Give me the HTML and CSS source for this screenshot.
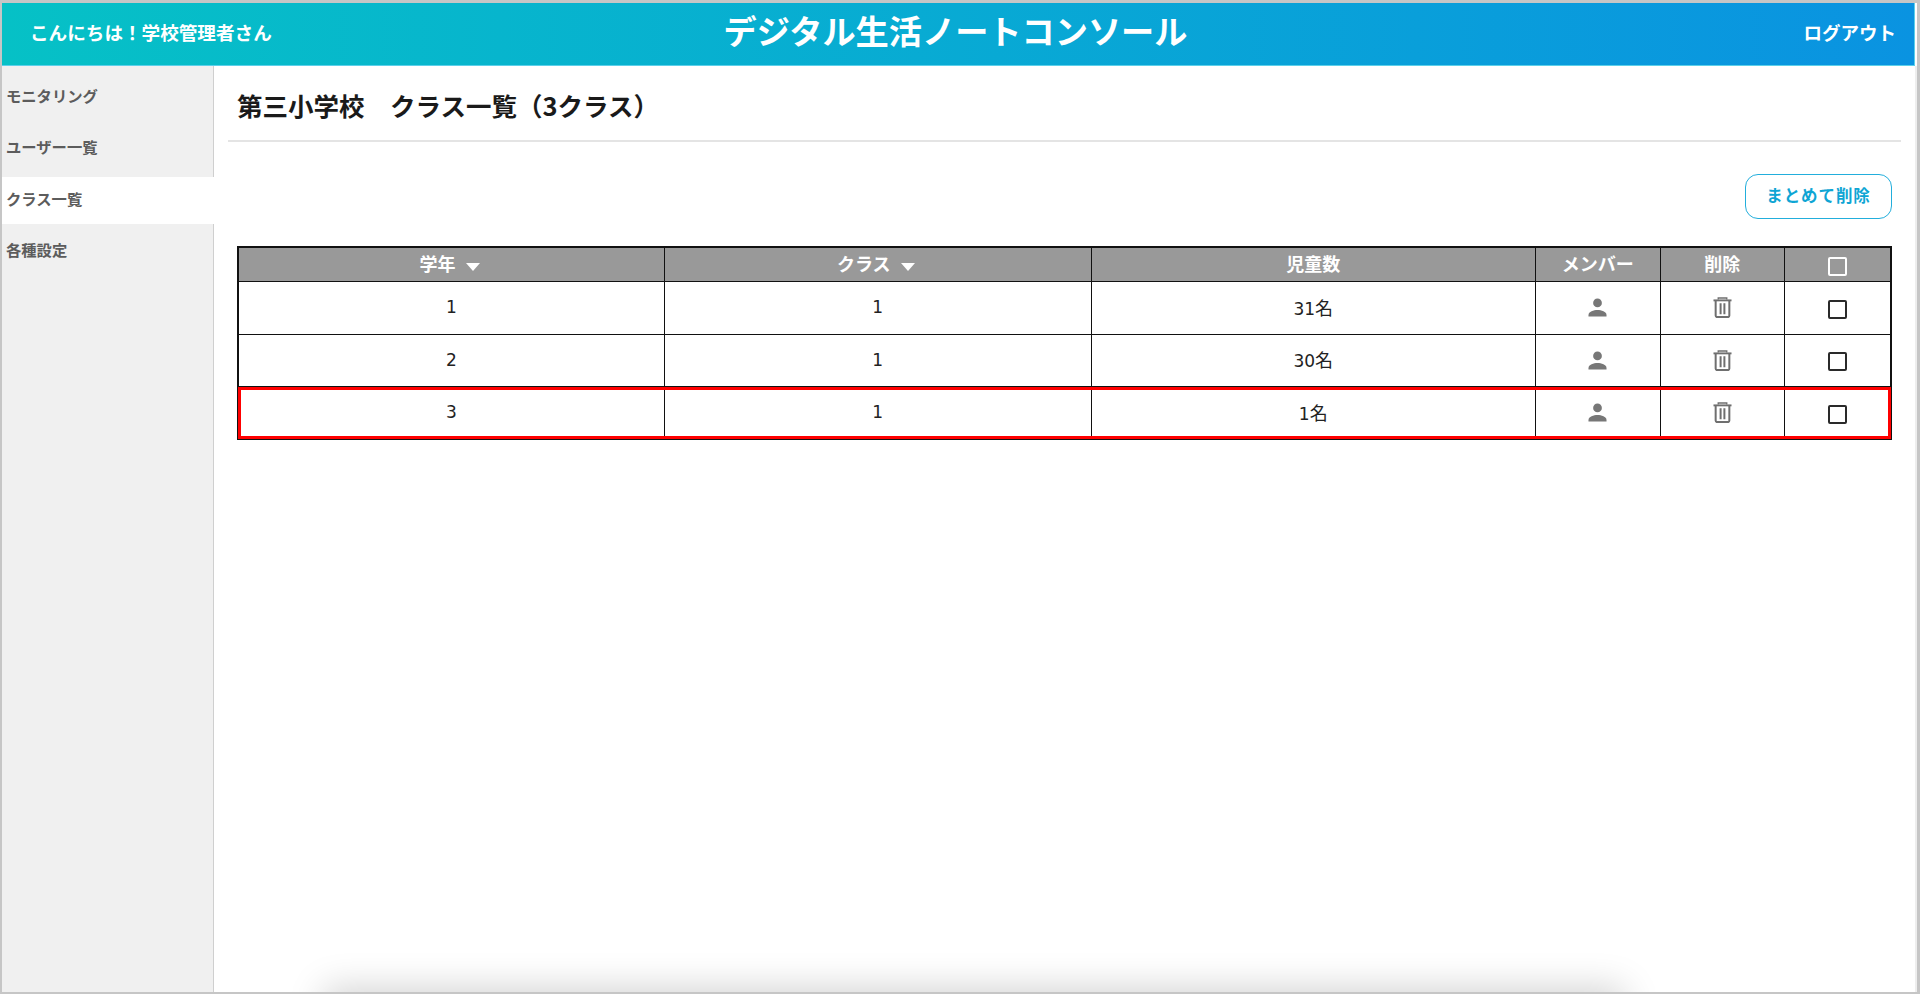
FILE: index.html
```html
<!DOCTYPE html>
<html lang="ja">
<head>
<meta charset="utf-8">
<title>デジタル生活ノートコンソール</title>
<link rel="stylesheet" href="styles.css">
</head>
<body>
<div class="frame">
  <header class="topbar">
    <div class="greeting">こんにちは！学校管理者さん</div>
    <div class="brand">デジタル生活ノートコンソール</div>
    <div class="logout">ログアウト</div>
  </header>
  <div class="body-row">
    <nav class="sidebar">
      <a class="nav-item">モニタリング</a>
      <a class="nav-item">ユーザー一覧</a>
      <a class="nav-item active">クラス一覧</a>
      <a class="nav-item">各種設定</a>
    </nav>
    <main class="content">
      <h1 class="page-title">第三小学校　クラス一覧（3クラス）</h1>
      <div class="actions"><button class="bulk-delete">まとめて削除</button></div>
      <table class="class-table">
        <colgroup>
          <col class="c-grade"><col class="c-class"><col class="c-count"><col class="c-icon"><col class="c-icon"><col>
        </colgroup>
        <thead>
          <tr>
            <th>学年<span class="sort"></span></th>
            <th>クラス<span class="sort"></span></th>
            <th>児童数</th>
            <th>メンバー</th>
            <th>削除</th>
            <th><span class="check check-head"></span></th>
          </tr>
        </thead>
        <tbody>
          <tr>
            <td>1</td><td>1</td><td>31<span class="unit">名</span></td>
            <td><svg class="icon" viewBox="0 0 20 20"><use href="#person"/></svg></td>
            <td><svg class="icon" viewBox="0 0 20 22"><use href="#trash"/></svg></td>
            <td><span class="check"></span></td>
          </tr>
          <tr>
            <td>2</td><td>1</td><td>30<span class="unit">名</span></td>
            <td><svg class="icon" viewBox="0 0 20 20"><use href="#person"/></svg></td>
            <td><svg class="icon" viewBox="0 0 20 22"><use href="#trash"/></svg></td>
            <td><span class="check"></span></td>
          </tr>
          <tr class="highlight">
            <td>3</td><td>1</td><td>1<span class="unit">名</span></td>
            <td><svg class="icon" viewBox="0 0 20 20"><use href="#person"/></svg></td>
            <td><svg class="icon" viewBox="0 0 20 22"><use href="#trash"/></svg></td>
            <td><span class="check"></span></td>
          </tr>
        </tbody>
      </table>
      <div class="bottom-shadow"></div>
    </main>
    <div class="edge-strip"></div>
  </div>
</div>
<svg class="defs" width="0" height="0">
  <defs>
    <g id="person" fill="#777">
      <circle cx="10" cy="5.2" r="4.6"/>
      <path d="M0.5 19.5v-1.7c0-3.6 5.5-5.3 9.5-5.3s9.5 1.7 9.5 5.3v1.7z"/>
    </g>
    <g id="trash" fill="none" stroke="#6f6f6f">
      <path d="M0.5 3.5h19" stroke-width="2"/>
      <path d="M5.5 2.6V1h9v1.6" stroke-width="1.4"/>
      <path d="M2.8 4v15.5a1.6 1.6 0 0 0 1.6 1.6h11.2a1.6 1.6 0 0 0 1.6-1.6V4" stroke-width="2.1"/>
      <path d="M8 6.5v11.5M12 6.5v11.5" stroke-width="2.1"/>
    </g>
  </defs>
</svg>
</body>
</html>
```
FILE: styles.css
```css
* { box-sizing: border-box; }
html, body { margin: 0; height: 100%; background: #fff; }
body {
  font-family: "Noto Sans CJK JP", "Noto Sans", sans-serif;
  color: #1a1a1a;
  overflow: hidden;
}
.defs { position: absolute; }
.frame {
  width: 1920px;
  height: 994px;
  border: solid #c6c6c6;
  border-width: 3px 3px 2px 2px;
  display: flex;
  flex-direction: column;
  background: #fff;
}
.topbar {
  flex: 0 0 63px;
  margin-right: 2px;
  display: grid;
  grid-template-columns: 1fr auto 1fr;
  align-items: center;
  padding: 0 18px 5px 28px;
  color: #fff;
  background: linear-gradient(90deg, #06c1c6 0%, #0a93e1 100%);
  border-bottom: 1px solid #5cd0ea;
  border-right: 1px solid #5cd0ea;
}
.greeting { font-size: 18.6px; font-weight: 700; }
.brand { font-size: 33.2px; font-weight: 700; line-height: 1; padding-bottom: 3px; margin-right: 15px; }
.logout { font-size: 18.5px; font-weight: 700; text-align: right; }
.body-row { flex: 1; display: flex; min-height: 0; }
.edge-strip { flex: 0 0 2px; background: #eee; }
.sidebar {
  flex: 0 0 212px;
  background: #f0f0f0;
  border-right: 1px solid #cfcfcf;
  padding-top: 8px;
  display: flex;
  flex-direction: column;
}
.nav-item {
  height: 46.5px;
  margin-bottom: 5px;
  padding: 0 0 5px 4px;
  display: flex;
  align-items: center;
  font-size: 15.3px;
  font-weight: 700;
  color: #5c5c5c;
}
.nav-item.active { background: #fff; margin-right: -1px; position: relative; }
.content {
  flex: 1;
  position: relative;
  overflow: hidden;
  padding: 0 23px;
  min-width: 0;
}
.page-title {
  margin: 0 -9px;
  padding: 2px 0 0 9px;
  height: 76px;
  display: flex;
  align-items: center;
  font-size: 25.5px;
  font-weight: 700;
  color: #1a1a1a;
  border-bottom: 2px solid #e4e4e4;
  white-space: pre;
}
.actions { display: flex; justify-content: flex-end; padding-top: 32px; }
.bulk-delete {
  width: 147px;
  height: 45px;
  border: 1.5px solid #22aedc;
  border-radius: 13px;
  background: #fff;
  color: #0ea5d4;
  font: 700 16.5px "Noto Sans CJK JP", sans-serif;
  letter-spacing: .9px;
  padding: 0 0 3px;
}
.class-table {
  width: 1655px;
  margin-top: 27px;
  border-collapse: collapse;
  table-layout: fixed;
  font-family: "DejaVu Sans", "Noto Sans CJK JP", sans-serif;
  border: 2px solid #111;
}
.c-grade { width: 426.5px; }
.c-class { width: 426.5px; }
.c-count { width: 444.5px; }
.c-icon { width: 124.5px; }
.class-table th, .class-table td {
  border: 1px solid #111;
  text-align: center;
  padding: 0;
  vertical-align: middle;
}
.class-table th {
  height: 34.5px;
  padding-bottom: 3px;
  background: #999;
  color: #fff;
  font-family: "Noto Sans CJK JP", sans-serif;
  font-size: 18px;
  font-weight: 700;
}
.class-table td { height: 52.5px; font-size: 17px; line-height: 1; color: #222; }
.unit { font-family: "Noto Sans CJK JP", sans-serif; font-size: 18px; line-height: 1; }
.sort {
  display: inline-block;
  margin: 0 4px 0 10px;
  border: solid transparent;
  border-width: 8px 7.5px 0;
  border-top-color: #fff;
  vertical-align: 0;
}
.icon { display: inline-block; width: 19px; height: 21px; vertical-align: middle; }
.check {
  display: inline-block;
  width: 19px;
  height: 19px;
  margin-top: 3px;
  border: 2px solid #2a2a2a;
  border-radius: 2px;
  vertical-align: middle;
  background: #fff;
}
.check-head { background: transparent; border-color: #fff; margin-top: 0; }
.highlight { outline: 3px solid #f00; outline-offset: -3px; }
.bottom-shadow {
  position: absolute;
  left: 114px;
  right: 295px;
  bottom: -34px;
  height: 34px;
  box-shadow: 0 0 36px 4px rgba(0, 0, 0, .18);
}
```
